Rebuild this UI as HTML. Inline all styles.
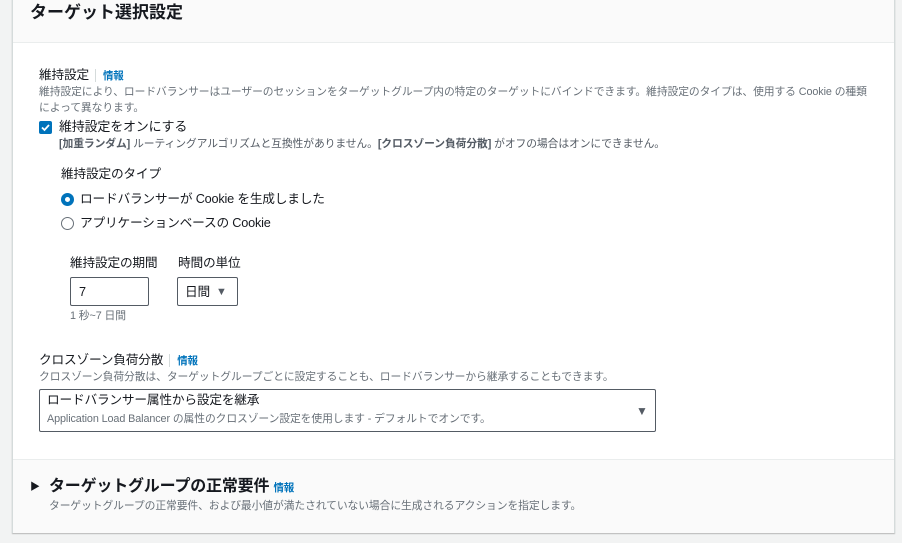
<!DOCTYPE html>
<html><head><meta charset="utf-8"><style>
*{box-sizing:border-box;margin:0;padding:0}
body{width:902px;height:543px;background:#f2f3f3;font-family:"Liberation Sans","Noto Sans CJK JP",sans-serif;color:#16191f;position:relative;overflow:hidden}
.card{position:absolute;left:12px;top:-2px;width:883px;height:535px;background:#fff;border:1px solid #d5dbdb;box-shadow:0 1px 1px rgba(0,0,0,.25)}
.hdr{position:absolute;left:0;top:0;width:100%;height:44px;background:#fafafa;border-bottom:1px solid #eaeded}
.ftr{position:absolute;left:0;top:460px;width:100%;height:74px;background:#fafafa;border-top:1px solid #eaeded}
.t{position:absolute;white-space:nowrap;line-height:1.2}
.info{color:#0073bb;font-weight:bold;font-size:10.5px}
.g{color:#687078;font-size:10.8px;letter-spacing:-0.1px}
.l{font-size:12.7px;letter-spacing:-0.2px}
.box{position:absolute;border:1px solid #545b64;border-radius:2px;background:#fff}
.sep{display:inline-block;width:1px;height:13px;background:#d5dbdb;vertical-align:middle;margin:0 7px 0 6px}
</style></head><body>
<div class="card">
<div class="hdr"></div>
<div class="ftr"></div>
</div>
<div class="t" style="left:30px;top:3px;font-size:17px;font-weight:bold">ターゲット選択設定</div>

<div class="t l" style="left:39px;top:68px">維持設定<span class="sep"></span><span class="info">情報</span></div>
<div class="t g" style="left:39px;top:84px;line-height:16px;white-space:normal;width:830px">維持設定により、ロードバランサーはユーザーのセッションをターゲットグループ内の特定のターゲットにバインドできます。維持設定のタイプは、使用する Cookie の種類によって異なります。</div>

<div style="position:absolute;left:39px;top:121px;width:13px;height:13px;background:#0073bb;border-radius:2px"><svg width="13" height="13"><path d="M3 6.5l2.5 2.5 4.5-5" stroke="#fff" stroke-width="1.8" fill="none"/></svg></div>
<div class="t" style="left:59px;top:119px;font-size:13px;letter-spacing:-0.2px">維持設定をオンにする</div>
<div class="t g" style="left:59px;top:138px;color:#545b64"><b>[加重ランダム]</b> ルーティングアルゴリズムと互換性がありません。<b>[クロスゾーン負荷分散]</b> がオフの場合はオンにできません。</div>

<div class="t l" style="left:61px;top:167px">維持設定のタイプ</div>
<div style="position:absolute;left:61px;top:193px;width:13px;height:13px;border-radius:50%;border:4px solid #0073bb;background:#fff"></div>
<div class="t l" style="left:80px;top:192px">ロードバランサーが Cookie を生成しました</div>
<div style="position:absolute;left:61px;top:217px;width:13px;height:13px;border-radius:50%;border:1px solid #687078;background:#fff"></div>
<div class="t l" style="left:80px;top:216px">アプリケーションベースの Cookie</div>

<div class="t l" style="left:70px;top:256px">維持設定の期間</div>
<div class="t l" style="left:178px;top:256px">時間の単位</div>
<div class="box" style="left:70px;top:277px;width:79px;height:29px"></div>
<div class="t l" style="left:79px;top:285px">7</div>
<div class="box" style="left:177px;top:277px;width:61px;height:29px"></div>
<div class="t l" style="left:185px;top:285px">日間</div>
<div class="t" style="left:216px;top:286px;font-size:11px;color:#545b64">▼</div>
<div class="t g" style="left:70px;top:310px">1 秒~7 日間</div>

<div class="t l" style="left:39px;top:353px">クロスゾーン負荷分散<span class="sep"></span><span class="info">情報</span></div>
<div class="t g" style="left:39px;top:371px">クロスゾーン負荷分散は、ターゲットグループごとに設定することも、ロードバランサーから継承することもできます。</div>
<div class="box" style="left:39px;top:389px;width:617px;height:43px"></div>
<div class="t l" style="left:47px;top:393px">ロードバランサー属性から設定を継承</div>
<div class="t g" style="left:47px;top:413px">Application Load Balancer の属性のクロスゾーン設定を使用します - デフォルトでオンです。</div>
<div class="t" style="left:636px;top:404px;font-size:12px;color:#545b64">▼</div>

<div class="t" style="left:30px;top:482px;font-size:10px">▶</div>
<div class="t" style="left:49px;top:477px;font-size:16px;font-weight:bold;letter-spacing:-0.2px">ターゲットグループの正常要件 <span class="info">情報</span></div>
<div class="t g" style="left:49px;top:500px">ターゲットグループの正常要件、および最小値が満たされていない場合に生成されるアクションを指定します。</div>
</body></html>
